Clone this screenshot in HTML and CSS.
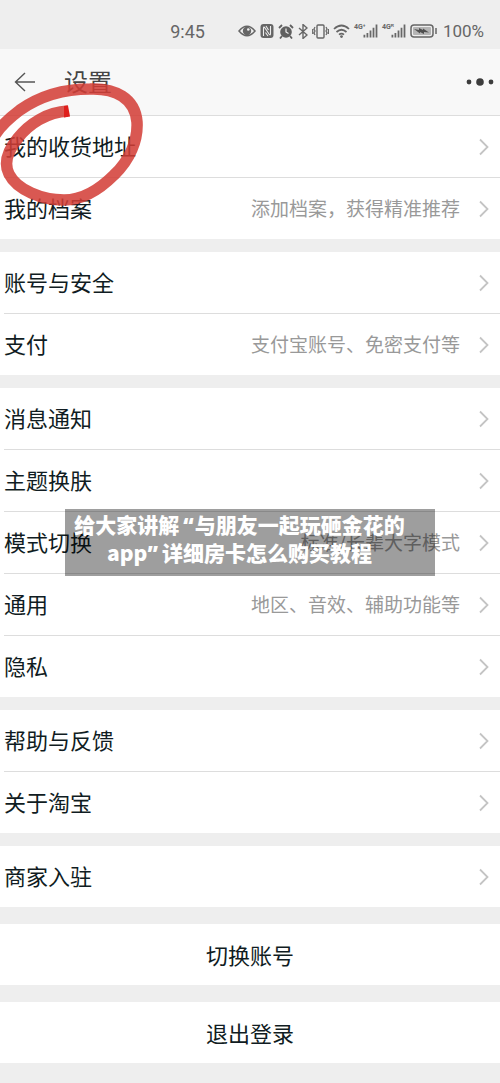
FILE: index.html
```html
<!DOCTYPE html>
<html lang="zh-CN">
<head>
<meta charset="utf-8">
<meta name="viewport" content="width=device-width, initial-scale=1">
<title>设置</title>
<link rel="stylesheet" href="styles.css">
</head>
<body>
<svg class="defs" width="0" height="0" aria-hidden="true">
  <symbol id="chevron" viewBox="0 0 12 18"><path d="M2 1.500 9.500 9 2 16.500" fill="none" stroke="#c4c4c4" stroke-width="1.800"/></symbol>
  <symbol id="bars" viewBox="0 0 16 14"><path d="M1.500 11v3M4.700 9v5M8 6.500V14M11.200 3.500V14M14.400 0v14" fill="none" stroke="#686868" stroke-width="1.900"/></symbol>
</svg>

<div class="status">
  <time class="clock">9:45</time>
  <div class="status-icons">
    <svg width="18" height="14" viewBox="0 0 18 14"><path d="M1 7Q9-2.500 17 7 9 16.500 1 7Z" fill="none" stroke="#666" stroke-width="1.500"/><circle cx="9" cy="7" r="4.200" fill="#666"/><circle cx="10.300" cy="5.500" r="1.300" fill="#eee"/></svg>
    <svg width="14" height="14" viewBox="0 0 14 14"><rect x=".5" width="13" height="14" rx="3" fill="#666"/><path d="M3.500 12V4.500Q3.500 2 5 4l4 6q1.500 2 1.500-.5V2M6 2l2.500 4M5.500 8.500 8 12" fill="none" stroke="#eee" stroke-width="1.100"/></svg>
    <svg width="16" height="15" viewBox="0 0 16 15"><circle cx="8" cy="8" r="5.800" fill="#606060"/><path d="M1 4 4 1M15 4l-3-3M4 12l-2 2.500M12 12l2 2.500" stroke="#606060" stroke-width="1.800"/><path d="M8 4.500V8l2.500 1.500" fill="none" stroke="#eee" stroke-width="1.200"/></svg>
    <svg width="10" height="15" viewBox="0 0 10 15"><path d="M1 4l8 7-4 3.500V.5L9 4l-8 7" fill="none" stroke="#666" stroke-width="1.400"/></svg>
    <svg width="17" height="15" viewBox="0 0 17 15"><rect x="5" y="1" width="7" height="13" rx="1" fill="none" stroke="#666" stroke-width="1.400"/><path d="M3 3 2 5l1 2-1 2 1 2M14 3l1 2-1 2 1 2-1 2M.7 5v5M16.400 5v5" fill="none" stroke="#666" stroke-width="1.200"/></svg>
    <svg width="17" height="14" viewBox="0 0 17 14"><path d="M1 5Q8.500-2 16 5M3.500 8q5-4.500 10 0M6 10.700q2.500-2 5 0" fill="none" stroke="#666" stroke-width="1.700"/><circle cx="8.500" cy="12.600" r="1.400" fill="#666"/></svg>
    <span class="signal"><span class="net">4G⁺</span><svg width="16" height="14"><use href="#bars"/></svg></span>
    <span class="signal"><span class="net">4Gᴿ</span><svg width="16" height="14"><use href="#bars"/></svg></span>
    <svg width="27" height="14" viewBox="0 0 27 14"><rect x="1" y="1" width="22" height="12" rx="3" fill="#eee" stroke="#666" stroke-width="1.500"/><rect x="3" y="3" width="18" height="8" rx="1" fill="#b5b5b5"/><path d="m4 5 5 1 0-2 4 2 0-1.500 6 4-5-.5v2L10 8v1.500Z" fill="#505050"/><path d="M26 4v6" stroke="#666" stroke-width="1.500"/></svg>
  </div>
  <span class="percent">100%</span>
</div>

<header class="bar">
  <button class="icon-btn" type="button" aria-label="返回"><svg width="22" height="20" viewBox="0 0 22 20"><path d="M21 10H1.500M11 1 1.500 10 11 19" fill="none" stroke="#555" stroke-width="1.400"/></svg></button>
  <h1 class="title">设置</h1>
  <button class="icon-btn" type="button" aria-label="更多"><svg width="28" height="10" viewBox="0 0 28 10"><g fill="#3d3d3d"><circle cx="3" cy="5" r="2.400"/><circle cx="14" cy="5" r="3.800"/><circle cx="25" cy="5" r="2.400"/></g></svg></button>
</header>

<main>
  <ul class="group">
    <li><a class="row" href="#address"><span class="label">我的收货地址</span><svg class="arrow"><use href="#chevron"/></svg></a></li>
    <li><a class="row" href="#profile"><span class="label">我的档案</span><span class="hint">添加档案，获得精准推荐</span><svg class="arrow"><use href="#chevron"/></svg></a></li>
  </ul>
  <ul class="group">
    <li><a class="row" href="#security"><span class="label">账号与安全</span><svg class="arrow"><use href="#chevron"/></svg></a></li>
    <li><a class="row" href="#pay"><span class="label">支付</span><span class="hint">支付宝账号、免密支付等</span><svg class="arrow"><use href="#chevron"/></svg></a></li>
  </ul>
  <ul class="group">
    <li><a class="row" href="#messages"><span class="label">消息通知</span><svg class="arrow"><use href="#chevron"/></svg></a></li>
    <li><a class="row" href="#theme"><span class="label">主题换肤</span><svg class="arrow"><use href="#chevron"/></svg></a></li>
    <li class="anchor"><a class="row" href="#mode"><span class="label">模式切换</span><span class="hint">标准/长辈大字模式</span><svg class="arrow"><use href="#chevron"/></svg></a>
      <p class="caption">给大家讲解<span class="quote open">“</span>与朋友一起玩砸金花的<br>app<span class="quote close">”</span>详细房卡怎么购买教程</p></li>
    <li><a class="row" href="#general"><span class="label">通用</span><span class="hint">地区、音效、辅助功能等</span><svg class="arrow"><use href="#chevron"/></svg></a></li>
    <li><a class="row" href="#privacy"><span class="label">隐私</span><svg class="arrow"><use href="#chevron"/></svg></a></li>
  </ul>
  <ul class="group">
    <li><a class="row" href="#help"><span class="label">帮助与反馈</span><svg class="arrow"><use href="#chevron"/></svg></a></li>
    <li><a class="row" href="#about"><span class="label">关于淘宝</span><svg class="arrow"><use href="#chevron"/></svg></a></li>
  </ul>
  <ul class="group">
    <li><a class="row" href="#merchant"><span class="label">商家入驻</span><svg class="arrow"><use href="#chevron"/></svg></a></li>
  </ul>
  <div class="actions">
    <button class="action" type="button">切换账号</button>
    <button class="action" type="button">退出登录</button>
  </div>
</main>

<svg class="marker" width="150" height="130" viewBox="0 80 150 130" aria-hidden="true">
  <path d="M-8 140C-2 128 8 119 20 110C40 96 65 89 90 89C115 88 135 98 137 122C138 140 130 160 114 175C100 189 84 200 64 200C42 200 17 190 9 174C3 162 9 149 18 138C29 124 47 112 68 111" fill="none" stroke="#d33c35" stroke-width="11.500" stroke-opacity=".86"/>
  <path d="m64 106 4-.5 2 11-6 1Z" fill="#df1f1c"/>
</svg>
</body>
</html>
```
FILE: styles.css
```css
* { box-sizing: border-box; }

body {
  margin: 0;
  position: relative;
  min-height: 100vh;
  background: #eee;
  color: #101c22;
  font-family: "Noto Sans CJK SC", sans-serif;
}

.defs { position: absolute; }

.status {
  display: flex;
  align-items: center;
  justify-content: flex-end;
  height: 49px;
  padding: 13px 16px 0 0;
  color: #666;
  font-family: Roboto, sans-serif;
  font-size: 17px;
}

.clock {
  margin-right: 33px;
  font-size: 18px;
}

.status-icons {
  display: flex;
  align-items: center;
  gap: 4px;
  margin-right: 6px;
}

.signal {
  display: flex;
  width: 24px;
}

.net {
  flex: none;
  align-self: flex-start;
  width: 9px;
  font-size: 7px;
  font-weight: 700;
  line-height: 7px;
  white-space: nowrap;
}

.bar {
  display: flex;
  align-items: center;
  height: 67px;
  padding: 0 6px 0 14px;
  background: #f8f8f8;
  border-bottom: 1px solid #ddd;
}

.icon-btn {
  display: flex;
  padding: 0;
  border: 0;
  background: none;
}

.title {
  flex: 1;
  margin: 0 0 0 28px;
  padding-bottom: 2px;
  color: #444;
  font-size: 24px;
  font-weight: 400;
  line-height: 36px;
}

.group {
  margin: 0 0 13px;
  padding: 0;
  background: #fff;
  list-style: none;
}

.group li + li::before {
  content: "";
  display: block;
  height: 1px;
  margin-left: 4px;
  background: #ddd;
}

.row {
  display: flex;
  align-items: center;
  height: 61px;
  padding: 0 10px 0 4px;
  color: inherit;
  text-decoration: none;
}

.label {
  flex: 1;
  padding-bottom: 4px;
  font-size: 22px;
  line-height: 32px;
}

.hint {
  padding-bottom: 2px;
  color: #999;
  font-size: 19px;
  line-height: 28px;
}

.arrow {
  width: 12px;
  height: 18px;
  margin-left: 18px;
}

.anchor { position: relative; }

.caption {
  position: absolute;
  top: -2px;
  right: 13%;
  left: 13%;
  margin: 0;
  padding: 2px 21px 9px 0;
  background: rgba(0, 0, 0, .38);
  color: #fff;
  font-size: 21px;
  font-weight: 900;
  line-height: 27px;
  text-align: center;
  white-space: nowrap;
}

.quote { font-family: "Noto Sans", sans-serif; }

.open { padding: 0 1px 0 4px; }

.close { padding-right: 4px; }

.actions {
  display: grid;
  gap: 17px;
  padding-top: 4px;
}

.action {
  height: 61px;
  padding: 0 0 2px;
  border: 0;
  background: #fff;
  color: inherit;
  font-family: inherit;
  font-size: 22px;
}

.marker {
  position: absolute;
  top: 80px;
  left: 0;
  pointer-events: none;
}
```
